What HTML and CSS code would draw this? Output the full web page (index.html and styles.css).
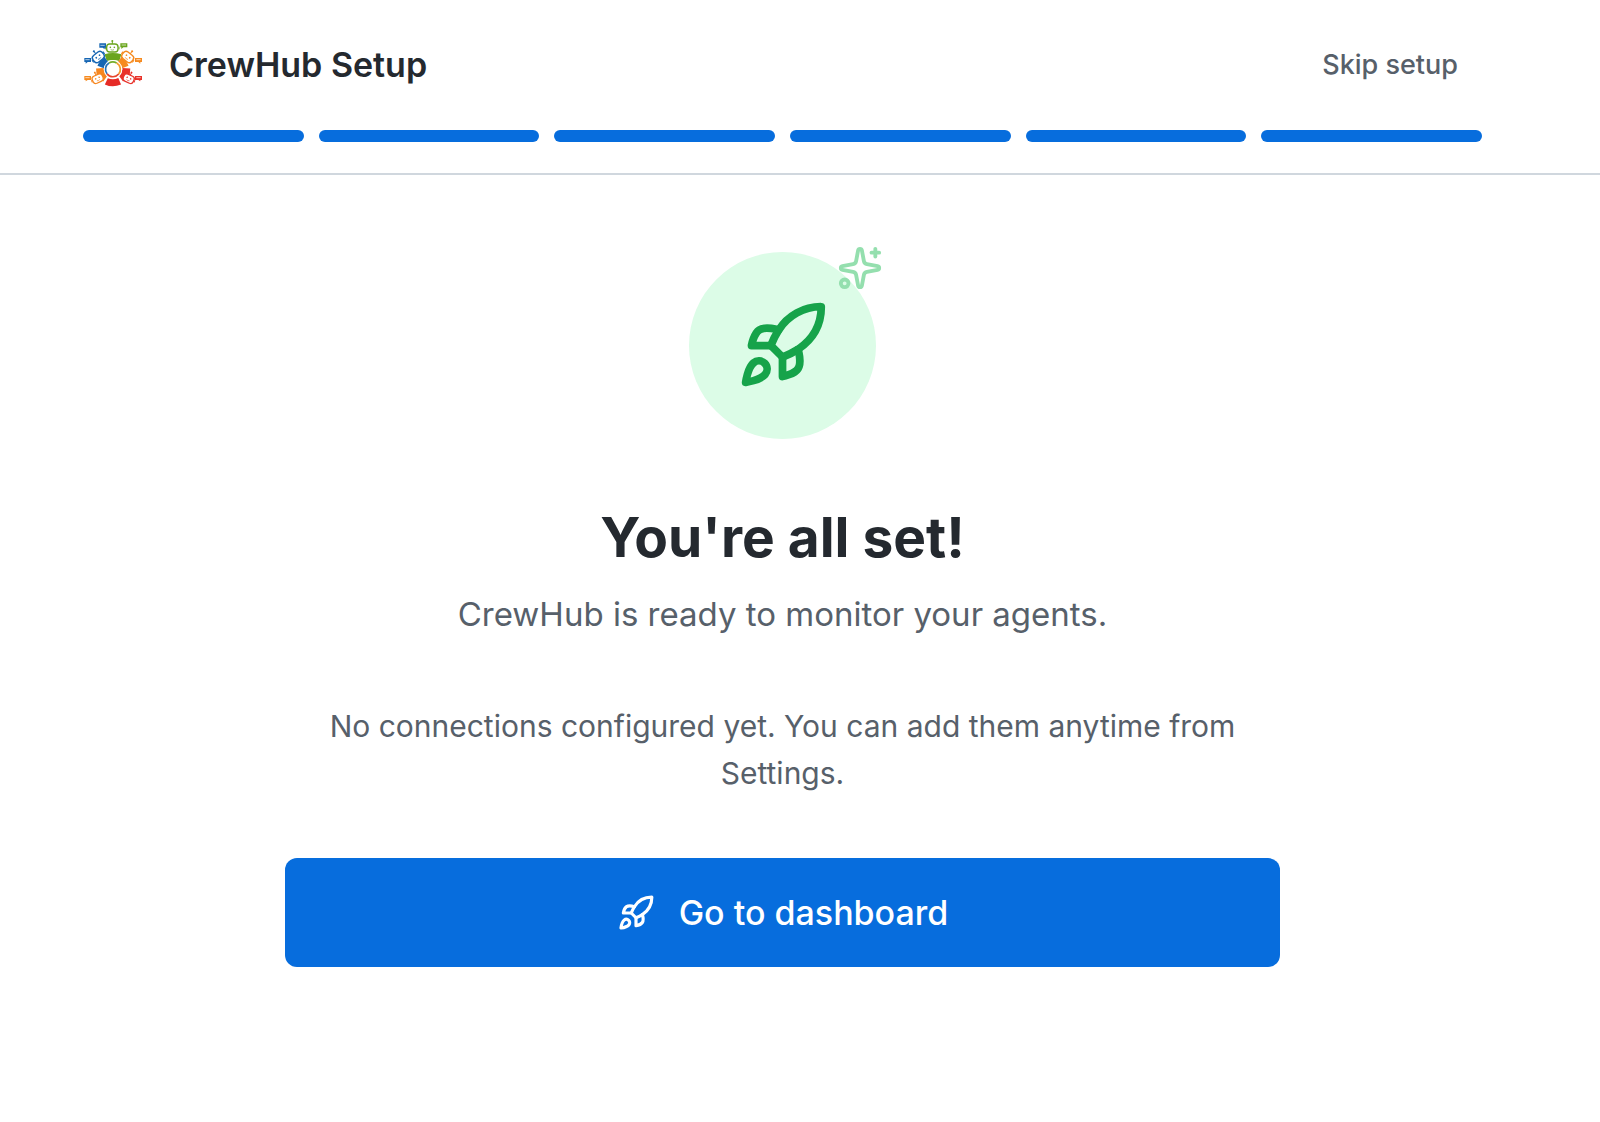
FILE: index.html
```html
<!DOCTYPE html>
<html lang="en">
<head>
<meta charset="utf-8">
<meta name="viewport" content="width=device-width, initial-scale=1">
<title>CrewHub Setup</title>
<link rel="stylesheet" href="styles.css">
</head>
<body>
<svg class="defs" aria-hidden="true">
  <symbol id="rocket" viewBox="0 0 24 24">
    <path d="M4.5 16.5c-1.5 1.26-2 5-2 5s3.74-.5 5-2c.71-.84.7-2.13-.09-2.91a2.18 2.18 0 0 0-2.91-.09z"/>
    <path d="m12 15-3-3a22 22 0 0 1 2-3.95A12.88 12.88 0 0 1 22 2c0 2.72-.78 7.5-6 11a22.35 22.35 0 0 1-4 2z"/>
    <path d="M9 12H4s.55-3.03 2-4c1.62-1.08 5 0 5 0"/>
    <path d="M12 15v5s3.03-.55 4-2c1.08-1.62 0-5 0-5"/>
  </symbol>
  <symbol id="bot" viewBox="-24 -24 48 48" overflow="visible">
    <rect x="-17" y="-12" width="34" height="24" rx="9" fill="#fff" stroke="currentColor" stroke-width="4"/>
    <path d="M0-12v-8M-20-4v8M20-4v8" stroke="currentColor" stroke-width="3" fill="none"/>
    <circle cx="0" cy="-21" r="3" fill="currentColor"/>
    <circle cx="-6" cy="-2" r="2.5" fill="currentColor"/>
    <circle cx="6" cy="-2" r="2.5" fill="currentColor"/>
    <path d="M-5 5q5 3 10 0" stroke="currentColor" stroke-width="2" fill="none"/>
  </symbol>
</svg>

<header class="header">
  <div class="header-row">
    <div class="brand">
      <svg class="logo" viewBox="24 10 186 186" aria-hidden="true">
        <g fill="none" stroke-width="21">
          <path stroke="#6aa51d" d="M92 84Q113 77 136 84"/>
          <path stroke="#1666b3" d="M77 112Q82 100 95 91"/>
          <path stroke="#f68a1e" d="M133 91Q146 100 151 112"/>
          <path stroke="#f6861f" d="M64 127L78 126Q80 139 91 147"/>
          <path stroke="#e8322a" d="M165 127L151 126Q149 139 138 147"/>
          <path stroke="#e62b26" d="M94 155Q113 164 134 155"/>
        </g>
        <circle cx="114" cy="119" r="28" fill="#fff"/>
        <g fill="none" stroke-width="5">
          <path stroke="#74ad2a" d="M102 100A22 22 0 0 1 125 100"/>
          <path stroke="#2672b8" d="M96 132A22 22 0 0 1 102 100"/>
          <path stroke="#f59a2a" d="M125 100A22 22 0 0 1 131 133"/>
          <path stroke="#e8452c" d="M131 133A22 22 0 0 1 96 132"/>
        </g>
        <g color="#6aa51d"><use href="#bot" x="88" y="31" width="48" height="48"/></g>
        <g color="#1666b3" transform="translate(70 82) rotate(-38)"><use href="#bot" x="-25" y="-25" width="50" height="50"/></g>
        <g color="#f68a1e" transform="translate(158 82) rotate(38)"><use href="#bot" x="-25" y="-25" width="50" height="50"/></g>
        <g color="#f6861f" transform="translate(68 147) rotate(-25)"><use href="#bot" x="-23" y="-23" width="46" height="46"/></g>
        <g color="#e8322a" transform="translate(161 147) rotate(25)"><use href="#bot" x="-23" y="-23" width="46" height="46"/></g>
        <path fill="#1666b3" d="M73 41h20v13h-4v5l-6-5h-10zM28 85h20v12h-10l-6 5v-5h-4z"/>
        <path fill="#6aa51d" d="M136 41h21v12h-12l-6 5v-5h-3z"/>
        <path fill="#f68a1e" d="M180 85h21v12h-5v5l-6-5h-10zM28 139h20v12h-10l-6 4v-4h-4z"/>
        <path fill="#e8322a" d="M180 139h21v12h-5v4l-6-4h-10z"/>
        <path stroke="#fff" stroke-width="2" d="M76 47h13M140 46h13M31 90h13M184 90h13M31 144h13M184 144h13"/>
      </svg>
      <span class="brand-name">CrewHub Setup</span>
    </div>
    <button class="skip" type="button">Skip setup</button>
  </div>
  <div class="steps" role="img" aria-label="Step 6 of 6">
    <span class="step"></span><span class="step"></span><span class="step"></span>
    <span class="step"></span><span class="step"></span><span class="step"></span>
  </div>
</header>

<main class="main">
  <div class="content">
    <div class="badge">
      <svg class="icon badge-rocket" aria-hidden="true"><use href="#rocket"/></svg>
      <svg class="icon badge-sparkles" viewBox="0 0 24 24" aria-hidden="true">
        <path d="M11.017 2.814a1 1 0 0 1 1.966 0l1.051 5.558a2 2 0 0 0 1.594 1.594l5.558 1.051a1 1 0 0 1 0 1.966l-5.558 1.051a2 2 0 0 0-1.594 1.594l-1.051 5.558a1 1 0 0 1-1.966 0l-1.051-5.558a2 2 0 0 0-1.594-1.594l-5.558-1.051a1 1 0 0 1 0-1.966l5.558-1.051a2 2 0 0 0 1.594-1.594z"/>
        <path d="M20 2v4"/><path d="M22 4h-4"/><circle cx="4" cy="20" r="2"/>
      </svg>
    </div>
    <h1 class="title">You're all set!</h1>
    <p class="subtitle">CrewHub is ready to monitor your agents.</p>
    <p class="note">No connections configured yet. You can add them anytime from Settings.</p>
    <button class="primary" type="button">
      <svg class="icon primary-icon" aria-hidden="true"><use href="#rocket"/></svg>
      Go to dashboard
    </button>
  </div>
</main>
</body>
</html>
```
FILE: styles.css
```css
* { box-sizing: border-box; }

body {
  margin: 0;
  background: #fff;
  color: #24292f;
  font-family: Inter, "Liberation Sans", sans-serif;
}

h1, p { margin: 0; }

button {
  border: 0;
  background: none;
  font-family: inherit;
  cursor: pointer;
}

.defs { position: absolute; width: 0; height: 0; }

.icon {
  fill: none;
  stroke: currentColor;
  stroke-width: 2;
  stroke-linecap: round;
  stroke-linejoin: round;
}

.header {
  padding: 31px 118px 31px 83px;
  border-bottom: 2px solid #d0d7de;
}

.header-row {
  display: flex;
  align-items: center;
  justify-content: space-between;
  height: 66px;
  margin-bottom: 33px;
}

.brand { display: flex; align-items: center; gap: 24px; }
.logo { width: 62px; height: 62px; }
.brand-name { font-size: 34px; font-weight: 600; }

.skip {
  padding: 12px 24px;
  color: #57606a;
  font-size: 27px;
  font-weight: 500;
}

.steps { display: flex; gap: 15px; }
.step { flex: 1; height: 12px; border-radius: 6px; background: #076ddd; }

.main { padding: 77px 118px 77px 83px; }

.content {
  display: flex;
  flex-direction: column;
  align-items: center;
  max-width: 995px;
  margin: 0 auto;
  text-align: center;
}

.badge {
  position: relative;
  display: grid;
  place-items: center;
  width: 187px;
  height: 187px;
  margin-bottom: 62px;
  border-radius: 50%;
  background: #dcfce7;
  color: #16a34a;
}

.badge-rocket { width: 93px; height: 93px; }

.badge-sparkles {
  position: absolute;
  top: -7px;
  right: -7px;
  width: 46px;
  height: 46px;
  color: #94dfae;
}

.title {
  margin-bottom: 14px;
  font-size: 55px;
  font-weight: 700;
  line-height: 72px;
}

.subtitle {
  margin-bottom: 62px;
  color: #57606a;
  font-size: 33px;
  line-height: 54px;
}

.note {
  margin-bottom: 61px;
  padding: 0 31px;
  color: #57606a;
  font-size: 30px;
  line-height: 47px;
}

.primary {
  display: flex;
  align-items: center;
  justify-content: center;
  gap: 24px;
  width: 100%;
  height: 109px;
  border-radius: 12px;
  background: #076ddd;
  color: #fff;
  font-size: 34px;
  font-weight: 500;
}

.primary-icon { width: 38px; height: 38px; }
```
